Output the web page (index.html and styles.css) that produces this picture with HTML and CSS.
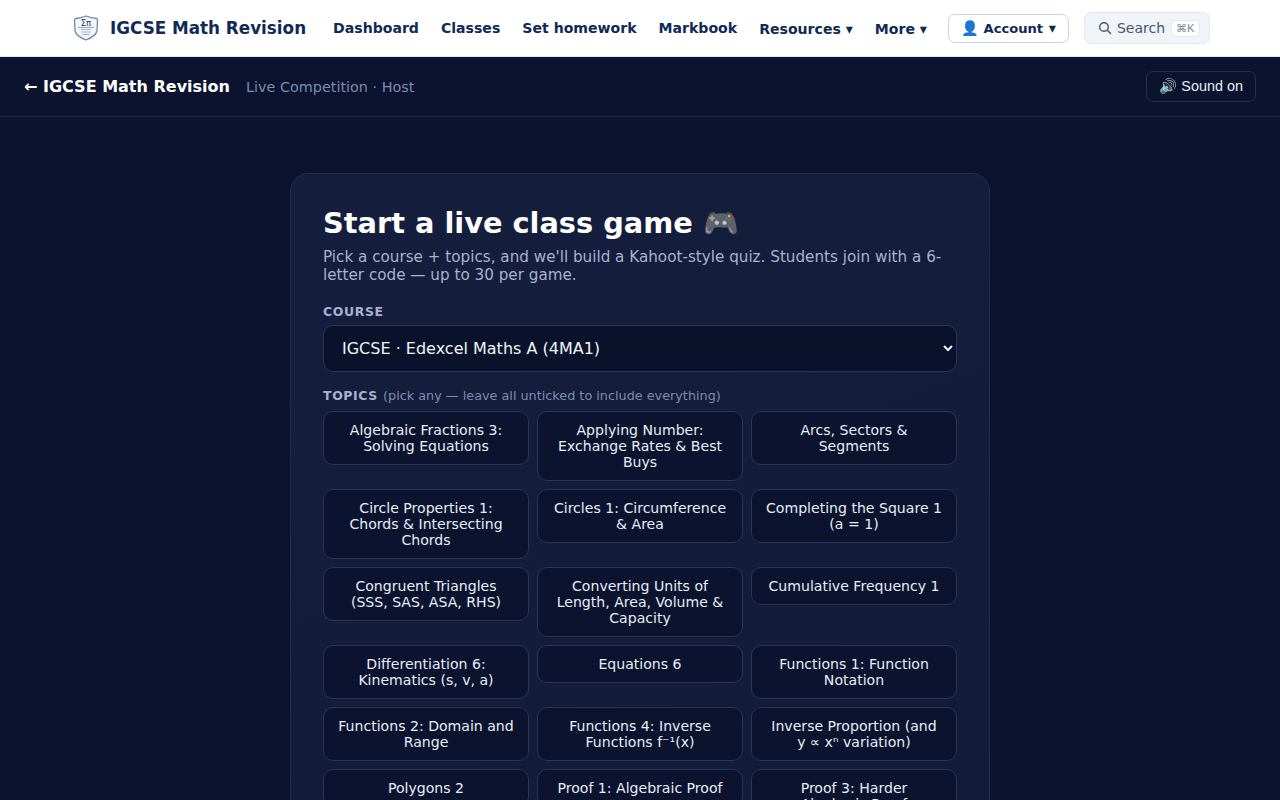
FILE: index.html
```html
<!DOCTYPE html>
<html lang="en">
<head>
    <meta charset="UTF-8">
    <title>IGCSE Math Revision - Live Competition</title>
    <link rel="stylesheet" href="styles.css">
</head>
<body>

<header class="topnav">
    <a class="brand" href="#">
        <svg class="brand-logo" width="26" height="28" viewBox="0 0 26 28">
            <path d="M2.5 4.5 Q8 4 13 2 Q18 4 23.5 4.5 Q24.5 4.7 24.5 6 L24 17 Q23 22 13 26 Q3 22 2 17 L1.5 6 Q1.5 4.7 2.5 4.5 Z" fill="#f4f6fa" stroke="#6f8bb0" stroke-width="1.3"/>
            <text class="logo-text" x="13" y="12" text-anchor="middle">Σπ</text>
            <path d="M5 13.5 H21" stroke="#7d94b5" stroke-width=".8"/>
            <path d="M8 15.5 H18 M8 18 H18 M9.5 20.5 H16.5" stroke="#a3b3ca" stroke-width="1.1"/>
        </svg>
        <span class="brand-name">IGCSE Math Revision</span>
    </a>
    <nav class="nav-links">
        <a href="#">Dashboard</a>
        <a href="#">Classes</a>
        <a href="#">Set homework</a>
        <a href="#">Markbook</a>
        <button class="nav-menu">Resources ▾</button>
        <button class="nav-menu">More ▾</button>
    </nav>
    <button class="account-btn"><span class="account-icon">👤</span> Account <span class="account-arrow">▾</span></button>
    <button class="search-btn">
        <svg width="14" height="14" viewBox="0 0 14 14" fill="none" stroke="#475569" stroke-width="1.4">
            <circle cx="6" cy="6" r="4.3"/>
            <path d="M9.3 9.3 L12.6 12.6" stroke-linecap="round"/>
        </svg>
        <span>Search</span>
        <kbd>⌘K</kbd>
    </button>
</header>

<div class="subbar">
    <a class="back-link" href="#">← IGCSE Math Revision</a>
    <span class="subbar-note">Live Competition · Host</span>
    <button class="sound-btn">🔊 Sound on</button>
</div>

<main class="page">
    <section class="card">
        <h1>Start a live class game 🎮</h1>
        <p class="lead">Pick a course + topics, and we'll build a Kahoot-style quiz. Students join with a 6-letter code — up to 30 per game.</p>

        <label class="field-label course-label" for="course">Course</label>
        <select id="course" class="course-select">
            <option>IGCSE · Edexcel Maths A (4MA1)</option>
        </select>

        <div class="topics-label"><span class="field-label">Topics</span> <span class="hint">(pick any — leave all unticked to include everything)</span></div>
        <div class="topics">
            <button class="topic">Algebraic Fractions 3: Solving Equations</button>
            <button class="topic">Applying Number: Exchange Rates &amp; Best Buys</button>
            <button class="topic">Arcs, Sectors &amp; Segments</button>
            <button class="topic">Circle Properties 1: Chords &amp; Intersecting Chords</button>
            <button class="topic">Circles 1: Circumference &amp; Area</button>
            <button class="topic">Completing the Square 1 (a = 1)</button>
            <button class="topic">Congruent Triangles (SSS, SAS, ASA, RHS)</button>
            <button class="topic">Converting Units of Length, Area, Volume &amp; Capacity</button>
            <button class="topic">Cumulative Frequency 1</button>
            <button class="topic">Differentiation 6: Kinematics (s, v, a)</button>
            <button class="topic">Equations 6</button>
            <button class="topic">Functions 1: Function Notation</button>
            <button class="topic">Functions 2: Domain and Range</button>
            <button class="topic">Functions 4: Inverse Functions f⁻¹(x)</button>
            <button class="topic">Inverse Proportion (and y ∝ xⁿ variation)</button>
            <button class="topic">Polygons 2</button>
            <button class="topic">Proof 1: Algebraic Proof</button>
            <button class="topic">Proof 3: Harder Algebraic Proof</button>
        </div>
    </section>
</main>

</body>
</html>
```

FILE: styles.css
```css
* {
    box-sizing: border-box;
}
html, body {
    margin: 0;
    height: 800px;
    overflow: hidden;
}
body {
    font-family: "DejaVu Sans", sans-serif;
    background: #0b132e;
    color: #fff;
}
a {
    text-decoration: none;
}
button {
    font-family: inherit;
}

.topnav {
    height: 57px;
    background: #fff;
    border-bottom: 1px solid #e2e8f0;
    padding-left: 73px;
    display: flex;
    align-items: center;
}
.brand {
    display: flex;
    align-items: center;
    gap: 11px;
    margin-right: 27px;
}
.logo-text {
    font-size: 8.5px;
    font-weight: 400;
    fill: #1c3763;
}
.brand-name {
    font-size: 16.8px;
    font-weight: 700;
    color: #0f2a55;
}
.nav-links {
    display: flex;
    align-items: center;
    gap: 22px;
    margin-right: 21px;
}
.nav-links a {
    font-size: 14.08px;
    font-weight: 700;
    color: #0f2a55;
}
.nav-menu {
    border: 0;
    padding: 2px 0 0;
    background: none;
    font-size: 14.08px;
    font-weight: 700;
    color: #0f2a55;
}
.account-btn {
    width: 121px;
    height: 29px;
    margin-right: 15px;
    padding: 0;
    background: #fff;
    border: 1px solid #cbd5e1;
    border-radius: 7px;
    font-size: 13.12px;
    font-weight: 700;
    color: #0f2a55;
}
.account-icon {
    font-size: 14.4px;
}
.account-arrow {
    margin-left: 1px;
    font-size: 14.4px;
}
.search-btn {
    width: 126px;
    height: 32px;
    padding: 0 12px 0 13px;
    display: flex;
    align-items: center;
    gap: 5px;
    background: #f1f5f9;
    border: 1px solid #e2e8f0;
    border-radius: 7px;
    font-size: 14px;
    color: #475569;
}
.search-btn svg {
    flex-shrink: 0;
}
.search-btn kbd {
    margin-left: 1px;
    padding: 1px 4px;
    font-family: "Liberation Sans", sans-serif;
    font-size: 11.2px;
    color: #7b889c;
    background: #fff;
    border: 1px solid #e2e8f0;
    border-radius: 4px;
}

.subbar {
    height: 60px;
    padding: 0 24px;
    border-bottom: 1px solid #1e2847;
    display: flex;
    align-items: center;
}
.back-link {
    font-size: 16px;
    font-weight: 700;
    color: #fff;
}
.subbar-note {
    margin-left: 16px;
    font-size: 14.4px;
    color: #7d8cb0;
}
.sound-btn {
    margin-left: auto;
    height: 31px;
    padding: 0 12px;
    background: transparent;
    border: 1px solid #252f50;
    border-radius: 7px;
    font-family: "Liberation Sans", sans-serif;
    font-size: 14.4px;
    color: #e8ecf4;
}

.page {
    padding-top: 56px;
    display: flex;
    justify-content: center;
}
.card {
    width: 700px;
    padding: 32px;
    background: linear-gradient(160deg, #151e3c, #121b37);
    border: 1px solid #232d4e;
    border-radius: 18px;
}
h1 {
    margin: 0 0 7px;
    font-size: 28.8px;
    line-height: 35px;
    font-weight: 700;
}
.lead {
    margin: 0 0 20px;
    font-size: 15.2px;
    line-height: 18px;
    color: #a8b3cf;
}
.field-label {
    font-size: 12.48px;
    font-weight: 700;
    letter-spacing: .62px;
    text-transform: uppercase;
    color: #a8b3cf;
}
.course-label {
    display: block;
    line-height: 15px;
}
.course-select {
    display: block;
    width: 100%;
    height: 47px;
    margin: 6px 0 15px;
    padding: 0 14px;
    background: #0a112b;
    border: 1px solid #2a3558;
    border-radius: 10px;
    font-family: inherit;
    font-size: 16px;
    color: #f1f5f9;
}
.topics-label {
    margin-bottom: 7px;
    line-height: 16px;
}
.hint {
    font-size: 12.8px;
    font-weight: 400;
    color: #7d8cb0;
}
.topics {
    display: grid;
    grid-template-columns: repeat(3, 1fr);
    gap: 8px;
    align-items: start;
}
.topic {
    padding: 10px 13.6px;
    background: #0b132e;
    border: 1px solid #2a3558;
    border-radius: 10px;
    font-size: 14.08px;
    line-height: 16px;
    color: #e8edf6;
}
```
